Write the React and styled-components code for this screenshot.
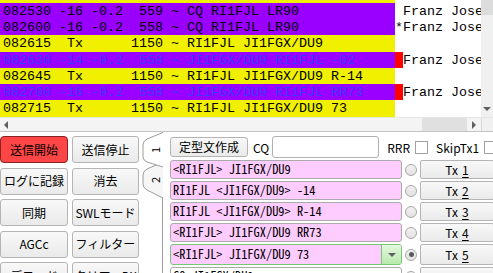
import styled, { createGlobalStyle } from "styled-components";

const GlobalStyle = createGlobalStyle`
  html, body {
    margin: 0;
    padding: 0;
    background: #fff;
    overflow: hidden;
  }
  body {
    font-family: "Noto Sans CJK JP", sans-serif;
  }
`;

const Window = styled.div`
  width: 493px;
  height: 273px;
  overflow: hidden;
  display: flex;
  flex-direction: column;
  background: #fff;
`;

/* ---- decoded text list ---- */
const DecodeBox = styled.div`
  display: flex;
  height: 117px;
  flex: none;
`;

const DecodeList = styled.div`
  flex: 1;
  overflow: hidden;
  font: 13.33px "Liberation Mono", monospace;
`;

const Lines = styled.div`
  margin-top: -13.6px;
`;

const Line = styled.div`
  display: flex;
  height: 16.3px;
  line-height: 17px;
  white-space: pre;
`;

const Hl = styled.span`
  flex: none;
  width: 395px;
  padding-left: 3px;
  box-sizing: border-box;
  overflow: hidden;
  background: ${(p) => p.$bg};
  color: ${(p) => p.$fg};
`;

const Flag = styled.span`
  flex: none;
  width: 8px;
  background: ${(p) => (p.$red ? "#ff0000" : "transparent")};
`;

const Country = styled.span`
  color: #000;
`;

const VScroll = styled.div`
  width: 12px;
  flex: none;
  display: flex;
  flex-direction: column;
  background: #f0f0f0;
`;

const VThumb = styled.div`
  height: 15px;
  background: #dcdcdc;
`;

const Track = styled.div`
  flex: 1;
`;

const ArrowBtn = styled.div`
  flex: none;
  width: ${(p) => p.$w || 12}px;
  height: ${(p) => p.$h || 13}px;
  display: flex;
  align-items: center;
  justify-content: center;
`;

const Arrow = styled.span`
  width: 0;
  height: 0;
  border: 4px solid transparent;
  ${(p) => p.$dir === "down" && "border-top-color: #606060; border-bottom-width: 0;"}
  ${(p) => p.$dir === "left" && "border-right-color: #606060; border-left-width: 0;"}
  ${(p) => p.$dir === "right" && "border-left-color: #606060; border-right-width: 0;"}
`;

const HScroll = styled.div`
  display: flex;
  height: 13px;
  flex: none;
  background: #f4f4f4;
  border-top: 1px solid #e6e6e6;
  border-bottom: 1px solid #c4c4c4;
`;

const HThumb = styled.div`
  width: 45px;
  background: #e0e0e0;
`;

const Corner = styled.div`
  width: 11px;
  border-left: 1px solid #d8d8d8;
  background: #f0f0f0;
`;

/* ---- controls ---- */
const Controls = styled.div`
  display: flex;
  flex: 1;
  min-height: 0;
`;

const ButtonGrid = styled.div`
  display: grid;
  grid-template-columns: 68px 67px;
  grid-auto-rows: 27px;
  column-gap: 4px;
  row-gap: 4.5px;
  margin-top: 4px;
  flex: none;
`;

const Btn = styled.button`
  font: 12px/1 "Noto Sans CJK JP", sans-serif;
  color: #000;
  padding: 0;
  margin: 0;
  box-sizing: border-box;
  border: 1px solid ${(p) => (p.$red ? "#8a2020" : "#b4b4b4")};
  border-radius: ${(p) => (p.$red ? 4 : 3)}px;
  background: ${(p) =>
    p.$red ? "#ff4646" : "linear-gradient(#f8f8f8, #eaeaea)"};
  display: flex;
  align-items: center;
  justify-content: center;
  white-space: nowrap;
`;

const TabStrip = styled.svg`
  flex: none;
  width: 22px;
  height: 68px;
  margin-left: 2px;
  margin-right: -1px;
  position: relative;
  z-index: 1;
`;

const TabPane = styled.div`
  flex: 1;
  border-left: 1px solid #a0a0a0;
  padding: 4px 0 0 7px;
  min-width: 0;
`;

const TopRow = styled.div`
  display: flex;
  align-items: center;
  height: 22px;
  white-space: nowrap;
`;

const MakeBtn = styled(Btn)`
  width: 78px;
  height: 20px;
  flex: none;
`;

const Label = styled.span`
  font: 12px "Noto Sans CJK JP", sans-serif;
  color: #000;
  margin-left: ${(p) => p.$ml || 0}px;
  flex: none;
`;

const TextBox = styled.div`
  width: 107px;
  height: 22px;
  box-sizing: border-box;
  border: 1px solid #b0b0b0;
  border-radius: 3px;
  background: #fff;
  margin-left: 3px;
  flex: none;
`;

const Check = styled.span`
  width: 13px;
  height: 13px;
  box-sizing: border-box;
  border: 1px solid #a0a0a0;
  background: #fff;
  margin-left: 5px;
  flex: none;
`;

const TxGrid = styled.div`
  display: grid;
  grid-template-columns: 232px 18px 74px;
  row-gap: 2px;
  margin-top: 2px;
`;

const MsgBox = styled.div`
  height: ${(p) => (p.$tall ? 21 : 19)}px;
  box-sizing: border-box;
  border: 1px solid ${(p) => (p.$active ? "#78c878" : "#ababab")};
  border-radius: 3px;
  background: ${(p) => (p.$white ? "#fff" : "#ffccff")};
  display: flex;
  align-items: center;
  overflow: hidden;
`;

const MsgText = styled.span`
  flex: 1;
  padding-left: 2px;
  font: 12.4px/1 "Noto Sans Mono CJK JP", "DejaVu Sans Mono", monospace;
  color: #000;
  white-space: pre;
`;

const DropBtn = styled.span`
  width: 19px;
  align-self: stretch;
  border-left: 1px solid #78c878;
  background: linear-gradient(#e4f7de, #b9e9ad);
  display: flex;
  align-items: center;
  justify-content: center;
`;

const Radio = styled.span`
  width: 12px;
  height: 12px;
  box-sizing: border-box;
  border-radius: 50%;
  border: 1px solid #a6a6a6;
  background: linear-gradient(#f2f2f2, #e2e2e2);
  justify-self: center;
  align-self: center;
  display: flex;
  align-items: center;
  justify-content: center;
  &::after {
    content: "";
    width: 5px;
    height: 5px;
    border-radius: 50%;
    background: ${(p) => (p.$on ? "#5a5a5a" : "transparent")};
  }
`;

const TxBtn = styled(Btn)`
  border-radius: 2px;
  gap: 4px;
  u {
    text-underline-offset: 2px;
  }
`;

const YEL = "#f0f000";
const PUR = "#9900ff";

const decodes = [
  { t: "082515  Tx      1150 ~ RI1FJL JI1FGX/DU9 73", bg: YEL, fg: "#000" },
  { t: "082530 -16 -0.2  559 ~ CQ RI1FJL LR90", bg: PUR, fg: "#000", flag: " ", c: "Franz Josef Land" },
  { t: "082600 -16 -0.2  558 ~ CQ RI1FJL LR90", bg: PUR, fg: "#000", flag: "*", c: "Franz Josef Land" },
  { t: "082615  Tx      1150 ~ RI1FJL JI1FGX/DU9", bg: YEL, fg: "#000" },
  { t: "082630 -14 -0.2  558 ~ JI1FGX/DU9 RI1FJL -02", bg: PUR, fg: "#3a3aff", red: true, flag: " ", c: "Franz Josef Land" },
  { t: "082645  Tx      1150 ~ RI1FJL JI1FGX/DU9 R-14", bg: YEL, fg: "#000" },
  { t: "082700 -16 -0.2  558 ~ JI1FGX/DU9 RI1FJL RR73", bg: PUR, fg: "#3a3aff", red: true, flag: " ", c: "Franz Josef Land" },
  { t: "082715  Tx      1150 ~ RI1FJL JI1FGX/DU9 73", bg: YEL, fg: "#000" },
];

const buttons = [
  { label: "送信開始", red: true },
  { label: "送信停止" },
  { label: "ログに記録" },
  { label: "消去" },
  { label: "同期" },
  { label: "SWLモード" },
  { label: "AGCc" },
  { label: "フィルター" },
  { label: "デコード" },
  { label: "クリアーDX" },
];

const messages = [
  "<RI1FJL> JI1FGX/DU9",
  "RI1FJL <JI1FGX/DU9> -14",
  "RI1FJL <JI1FGX/DU9> R-14",
  "<RI1FJL> JI1FGX/DU9 RR73",
  "<RI1FJL> JI1FGX/DU9 73",
  "CQ JI1FGX/DU9",
];

function Tabs() {
  return (
    <TabStrip viewBox="0 0 22 68">
      <path
        d="M22 30 L6 37 Q2 39 2 43 L2 52 Q2 56 6 58 L22 66"
        fill="#f6f6f6"
        stroke="#9c9c9c"
      />
      <path
        d="M22 0.5 L6 7 Q2 9 2 13 L2 25 Q2 28 6 30 L22 35"
        fill="#fff"
        stroke="#9c9c9c"
      />
      <text
        x="14"
        y="18"
        transform="rotate(-90 14 18)"
        textAnchor="middle"
        dominantBaseline="central"
        fontSize="11"
        fontFamily="Noto Sans CJK JP, sans-serif"
      >
        1
      </text>
      <text
        x="14"
        y="48"
        transform="rotate(-90 14 48)"
        textAnchor="middle"
        dominantBaseline="central"
        fontSize="11"
        fontFamily="Noto Sans CJK JP, sans-serif"
      >
        2
      </text>
    </TabStrip>
  );
}

function Row({ m, n }) {
  const active = n === 5;
  return (
    <>
      <MsgBox $active={active} $tall={active} $white={n === 6}>
        <MsgText>{m}</MsgText>
        {active && (
          <DropBtn>
            <Arrow $dir="down" />
          </DropBtn>
        )}
      </MsgBox>
      <Radio $on={active} />
      <TxBtn>
        Tx <u>{n}</u>
      </TxBtn>
    </>
  );
}

export default function App() {
  return (
    <Window>
      <GlobalStyle />
      <DecodeBox>
        <DecodeList>
          <Lines>
            {decodes.map((d, i) => (
              <Line key={i}>
                <Hl $bg={d.bg} $fg={d.fg}>{d.t}</Hl>
                <Flag $red={d.red}>{d.flag || ""}</Flag>
                {d.c && <Country>{d.c}</Country>}
              </Line>
            ))}
          </Lines>
        </DecodeList>
        <VScroll>
          <VThumb />
          <Track />
          <ArrowBtn $h={16}>
            <Arrow $dir="down" />
          </ArrowBtn>
        </VScroll>
      </DecodeBox>
      <HScroll>
        <ArrowBtn $w={12}>
          <Arrow $dir="left" />
        </ArrowBtn>
        <Track />
        <HThumb />
        <ArrowBtn $w={14}>
          <Arrow $dir="right" />
        </ArrowBtn>
        <Corner />
      </HScroll>
      <Controls>
        <ButtonGrid>
          {buttons.map((b) => (
            <Btn key={b.label} $red={b.red}>
              {b.label}
            </Btn>
          ))}
        </ButtonGrid>
        <Tabs />
        <TabPane>
          <TopRow>
            <MakeBtn>定型文作成</MakeBtn>
            <Label $ml={5}>CQ</Label>
            <TextBox />
            <Label $ml={8}>RRR</Label>
            <Check />
            <Label $ml={8}>SkipTx1</Label>
            <Check />
          </TopRow>
          <TxGrid>
            {messages.map((m, i) => (
              <Row key={m} m={m} n={i + 1} />
            ))}
          </TxGrid>
        </TabPane>
      </Controls>
    </Window>
  );
}
